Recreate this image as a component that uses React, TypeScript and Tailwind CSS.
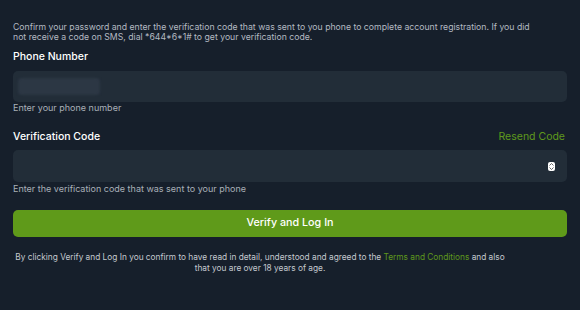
import React from "react";

export default function App() {
  return (
    <div className="w-[580px] h-[310px] bg-[#161f2b] px-[13px] pt-[22px] text-white" style={{ fontFamily: "Inter, 'Noto Sans', sans-serif" }}>
      <p className="whitespace-nowrap text-[8.7px] leading-[10px] text-[#b4bac2]">
        Confirm your password and enter the verification code that was sent to you phone to complete account registration. If you did
        <br />
        not receive a code on SMS, dial *644*6*1# to get your verification code.
      </p>
      <div className="mt-[8px] text-[10.5px] font-medium leading-[14px]">Phone Number</div>
      <div className="mt-[7px] h-[31px] w-full rounded-[5px] bg-[#222d38] flex items-center px-[5px]">
        <div className="h-[17px] w-[82px] rounded-[4px] bg-[#2c3744] blur-[1px]" />
      </div>
      <div className="mt-0 text-[9px] leading-[12px] text-[#a9b0b8]">Enter your phone number</div>
      <div className="mt-[16px] flex items-center justify-between leading-[14px]">
        <span className="text-[10.5px] font-medium">Verification Code</span>
        <span className="text-[10.5px] text-[#5f9a1c] mr-[2px]">Resend Code</span>
      </div>
      <div className="mt-[6px] h-[32px] w-full rounded-[5px] bg-[#222d38] flex items-center justify-end pr-[12px]">
        <div className="h-[9px] w-[7px] rounded-[2px] bg-white flex flex-col items-center justify-center gap-[1px]">
          <svg width="5" height="3" viewBox="0 0 5 3"><path d="M0.5 2.5 L2.5 0.5 L4.5 2.5" stroke="#444" strokeWidth="0.8" fill="none" /></svg>
          <svg width="5" height="3" viewBox="0 0 5 3"><path d="M0.5 0.5 L2.5 2.5 L4.5 0.5" stroke="#444" strokeWidth="0.8" fill="none" /></svg>
        </div>
      </div>
      <div className="mt-[1px] text-[9px] leading-[12px] text-[#a9b0b8]">Enter the verification code that was sent to your phone</div>
      <button className="mt-[15px] h-[27px] w-full rounded-[5px] bg-[#5f9a1a] text-[10.75px] font-medium text-white">
        Verify and Log In
      </button>
      <p className="mt-[15px] mr-[60px] whitespace-nowrap text-center text-[8.3px] leading-[11px] text-[#c4c9cf]">
        By clicking Verify and Log In you confirm to have read in detail, understood and agreed to the{" "}
        <span className="text-[#5f9a1c]">Terms and Conditions</span> and also
        <br />
        that you are over 18 years of age.
      </p>
    </div>
  );
}
